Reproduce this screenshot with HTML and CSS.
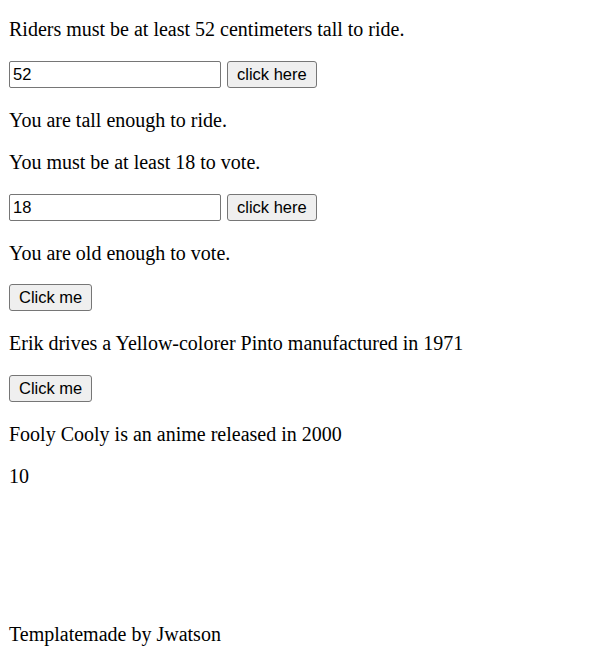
FILE: index.html
```html
<!DOCTYPE html>
<html>
<head>
<meta charset="utf-8">
<link rel="stylesheet" href="styles.css">
</head>
<body>
<p class="line">Riders must be at least 52 centimeters tall to ride.</p>
<div class="form"><input class="field" type="text" value="52"><button class="btn">click here</button></div>
<p class="line">You are tall enough to ride.</p>
<p class="line">You must be at least 18 to vote.</p>
<div class="form"><input class="field" type="text" value="18"><button class="btn">click here</button></div>
<p class="line">You are old enough to vote.</p>
<div class="form"><button class="btn">Click me</button></div>
<p class="line">Erik drives a Yellow-colorer Pinto manufactured in 1971</p>
<div class="form"><button class="btn">Click me</button></div>
<p class="line">Fooly Cooly is an anime released in 2000</p>
<p class="line">10</p>
<p class="line footer">Templatemade by Jwatson</p>
</body>
</html>
```
FILE: styles.css
```css
html, body {
  margin: 0;
  padding: 0;
  background: #fff;
}
body {
  padding: 18px 8px 0 9px;
  font-family: "Liberation Serif", "Times New Roman", serif;
  font-size: 20px;
  line-height: 22px;
  color: #000;
}
.line {
  margin: 0 0 20.5px 0;
}
.form {
  display: flex;
  gap: 6px;
  margin: 0 0 21px 0;
}
.field {
  box-sizing: border-box;
  width: 212px;
  height: 27px;
  border: 1px solid #767676;
  border-radius: 2px;
  padding: 1px 3px;
  font-family: "Liberation Sans", Arial, sans-serif;
  font-size: 16.5px;
  color: #000;
  background: #fff;
}
.btn {
  box-sizing: border-box;
  height: 27px;
  border: 1px solid #767676;
  border-radius: 3px;
  background: #efefef;
  padding: 0 9px;
  font-family: "Liberation Sans", Arial, sans-serif;
  font-size: 16.5px;
  color: #000;
}
.footer {
  margin-top: 136px;
}
```
